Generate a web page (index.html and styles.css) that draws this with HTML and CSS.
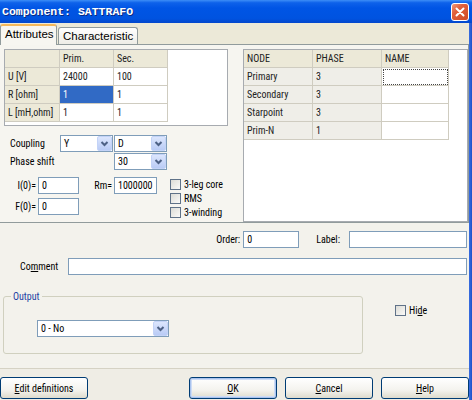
FILE: index.html
```html
<!DOCTYPE html>
<html>
<head>
<meta charset="utf-8">
<link rel="stylesheet" href="styles.css">
</head>
<body>
<div class="titlebar">
  <span class="title">Component: SATTRAFO</span>
  <span class="close"><svg viewBox="0 0 18 18" width="18" height="18"><path d="M5.5 5.5 L12.5 12.5 M12.5 5.5 L5.5 12.5" stroke="#fff" stroke-width="2" stroke-linecap="round"/></svg></span>
</div>
<div class="frame">
  <div class="dlg">
    <div class="tabs">
      <div class="tab active">Attributes</div>
      <div class="tab">Characteristic</div>
    </div>
    <div class="panel">
      <div class="lcol">
        <div class="gridbox">
          <table class="pgrid">
            <colgroup><col class="pc1"><col class="pc2"><col class="pc3"></colgroup>
            <tr><th></th><th>Prim.</th><th>Sec.</th></tr>
            <tr><th>U [V]</th><td>24000</td><td>100</td></tr>
            <tr><th>R [ohm]</th><td class="sel">1</td><td>1</td></tr>
            <tr><th>L [mH,ohm]</th><td>1</td><td>1</td></tr>
          </table>
        </div>
        <div class="crow coupling">
          <span class="clbl">Coupling</span>
          <div class="combo w53"><span class="cval">Y</span><span class="arr"><svg viewBox="0 0 15 15" width="15" height="15"><path d="M4.5 6 L7.5 9 L10.5 6" fill="none" stroke="#4d6185" stroke-width="2"/></svg></span></div>
          <div class="combo w53 ml1"><span class="cval">D</span><span class="arr"><svg viewBox="0 0 15 15" width="15" height="15"><path d="M4.5 6 L7.5 9 L10.5 6" fill="none" stroke="#4d6185" stroke-width="2"/></svg></span></div>
        </div>
        <div class="crow phase">
          <span class="clbl wide">Phase shift</span>
          <div class="combo w53"><span class="cval">30</span><span class="arr"><svg viewBox="0 0 15 15" width="15" height="15"><path d="M4.5 6 L7.5 9 L10.5 6" fill="none" stroke="#4d6185" stroke-width="2"/></svg></span></div>
        </div>
        <div class="init">
          <div class="icol">
            <div class="irow"><span class="ilbl">I(0)=</span><span class="inp w41">0</span></div>
            <div class="irow gap4"><span class="ilbl">F(0)=</span><span class="inp w41">0</span></div>
          </div>
          <div class="irow rm"><span class="rlbl">Rm=</span><span class="inp w43">1000000</span></div>
          <div class="checks">
            <div class="chk"><span class="box"></span>3-leg core</div>
            <div class="chk"><span class="box"></span>RMS</div>
            <div class="chk"><span class="box"></span>3-winding</div>
          </div>
        </div>
      </div>
      <div class="rcol">
        <table class="ngrid">
          <colgroup><col class="nc1"><col class="nc2"><col class="nc3"></colgroup>
          <tr><th>NODE</th><th>PHASE</th><th>NAME</th></tr>
          <tr><td>Primary</td><td>3</td><td class="nm focus"></td></tr>
          <tr><td>Secondary</td><td>3</td><td class="nm"></td></tr>
          <tr><td>Starpoint</td><td>3</td><td class="nm"></td></tr>
          <tr><td>Prim-N</td><td>1</td><td class="nm"></td></tr>
        </table>
      </div>
    </div>
    <div class="orow">
      <span class="olbl">Order:</span><span class="inp w56">0</span>
      <span class="llbl">Label:</span><span class="inp w118"></span>
    </div>
    <div class="comrow">
      <span class="comlbl">Co<u>m</u>ment</span><span class="inp grow"></span>
    </div>
    <div class="outrow">
      <fieldset class="group">
        <legend>Output</legend>
        <div class="combo w132 outsel"><span class="cval">0 - No</span><span class="arr"><svg viewBox="0 0 15 15" width="15" height="15"><path d="M4.5 6 L7.5 9 L10.5 6" fill="none" stroke="#4d6185" stroke-width="2"/></svg></span></div>
      </fieldset>
      <div class="chk hide"><span class="box"></span>Hi<u>d</u>e</div>
    </div>
    <div class="footer">
      <button class="btn"><u>E</u>dit definitions</button>
      <div class="btns">
        <button class="btn def"><u>O</u>K</button>
        <button class="btn"><u>C</u>ancel</button>
        <button class="btn"><u>H</u>elp</button>
      </div>
    </div>
  </div>
  <div class="rframe"></div>
</div>
</body>
</html>
```
FILE: styles.css
```css
* { box-sizing: border-box; }
body {
  margin: 0;
  width: 472px;
  height: 400px;
  overflow: hidden;
  font-family: "Roboto Condensed", "Liberation Sans", Arial, sans-serif;
  font-size: 10px;
  color: #000;
  background: #ece9d8;
}
.titlebar {
  height: 23px;
  display: flex;
  align-items: center;
  justify-content: space-between;
  padding: 0 3px 0 2px;
  background: linear-gradient(#3d8ef7 0%, #0e62ea 12%, #0055e5 35%, #0053e0 80%, #0347cc 100%);
}
.title {
  font: bold 11.5px "Liberation Mono", monospace;
  color: #fff;
  text-shadow: 1px 1px 0 #0a2a80;
}
.close {
  width: 18px;
  height: 18px;
  border: 1px solid #fff;
  border-radius: 3px;
  background: linear-gradient(135deg, #f09a7c 0%, #e0603c 35%, #cf4a26 100%);
  display: flex;
}
.close svg { display: block; margin: -1px; }
.frame { display: flex; height: 377px; }
.dlg {
  width: 469px;
  display: flex;
  flex-direction: column;
  background: #f3f2ec;
}
.rframe { width: 3px; background: linear-gradient(90deg, #3a6fe0, #1b4fc9); }
.tabs {
  height: 21px;
  display: flex;
  align-items: flex-end;
  background: #ece9d8;
}
.tab {
  height: 17px;
  padding: 0 4px;
  border: 1px solid #919b9c;
  border-bottom: none;
  border-radius: 3px 3px 0 0;
  background: linear-gradient(#fefefe, #eeede6);
  font: 11.5px "Liberation Sans", Arial, sans-serif;
  line-height: 16px;
  margin-left: 1px;
}
.tab.active {
  height: 21px;
  width: 57px;
  margin-left: 0;
  border-top: 2px solid #f3b85c;
  background: #f7f6f1;
  line-height: 17px;
  position: relative;
  z-index: 1;
  margin-bottom: -1px;
}
.panel {
  height: 179px;
  border: 1px solid #919b9c;
  border-left: none;
  display: flex;
  padding: 4px 0 0 4px;
  background: #f6f5f0;
}
.lcol { width: 224px; }
.gridbox {
  height: 77px;
  border: 1px solid #a7abb0;
  background: #fff;
}
table { border-collapse: separate; border-spacing: 0; table-layout: fixed; }
.pgrid { width: 163px; }
.pc1 { width: 55px; }
.pc2, .pc3 { width: 54px; }
.pgrid th, .pgrid td, .ngrid th, .ngrid td {
  height: 18px;
  padding: 0 0 0 3px;
  border-right: 1px solid #cfccc0;
  border-bottom: 1px solid #cfccc0;
  font-weight: normal;
  text-align: left;
  white-space: nowrap;
  overflow: hidden;
  color: #222;
}
.pgrid th, .ngrid th { background: #ece9d8; }
.pgrid td { background: #fff; }
.pgrid td.sel { background: #316ac5; color: #fff; }
.rcol {
  margin-left: 15px;
  width: 225px;
  height: 173px;
  border: 1px solid #a7abb0;
  background: #fff;
}
.ngrid { width: 205px; }
.nc1, .nc2 { width: 69px; }
.nc3 { width: 67px; }
.ngrid td { background: #efeee8; }
.ngrid td.nm { background: #fff; }
.ngrid td.focus { outline: 1px dotted #444; outline-offset: -2px; }
.crow { display: flex; align-items: center; padding-left: 6px; height: 17px; }
.coupling { margin-top: 9px; }
.phase { margin-top: 1px; }
.clbl { width: 50px; }
.clbl.wide { width: 104px; }
.combo {
  height: 17px;
  border: 1px solid #7f9db9;
  background: #fff;
  display: flex;
  align-items: center;
  justify-content: space-between;
  padding: 0 0 0 3px;
}
.ml1 { margin-left: 1px; }
.w53 { width: 53px; }
.w132 { width: 132px; }
.outsel { margin-left: 33px; }
.arr {
  width: 15px;
  height: 15px;
  border: 1px solid #c3d3f7;
  border-radius: 2px;
  background: linear-gradient(#dce6fd, #b9cbf5);
  display: flex;
}
.arr svg { display: block; margin: -1px; }
.init { display: flex; margin-top: 7px; padding-left: 4px; white-space: nowrap; }
.irow { display: flex; align-items: center; }
.gap4 { margin-top: 4px; }
.ilbl { width: 28px; text-align: right; margin-right: 2px; }
.inp {
  height: 17px;
  border: 1px solid #7f9db9;
  background: #fff;
  padding: 0 3px;
  line-height: 15px;
  display: block;
  white-space: nowrap;
  overflow: hidden;
}
.w41 { width: 41px; }
.w43 { width: 43px; }
.w56 { width: 56px; }
.w118 { width: 118px; }
.rm { margin-left: 12px; align-self: flex-start; }
.rlbl { width: 21px; text-align: right; margin-right: 2px; }
.checks { margin-left: 13px; }
.chk { display: flex; align-items: center; height: 14px; white-space: nowrap; }
.box {
  width: 11px;
  height: 11px;
  border: 1px solid #5f7288;
  background: linear-gradient(135deg, #dcdcd6, #fafaf8);
  margin-right: 3px;
  flex: none;
}
.orow {
  display: flex;
  align-items: center;
  justify-content: flex-end;
  padding-right: 2px;
  margin-top: 8px;
  height: 17px;
}
.olbl { margin-right: 3px; }
.llbl { margin-left: 17px; margin-right: 9px; }
.comrow {
  display: flex;
  align-items: center;
  margin-top: 10px;
  padding-left: 20px;
  padding-right: 2px;
  height: 17px;
}
.comlbl { width: 48px; }
.grow { flex: 1; }
.outrow { display: flex; align-items: flex-start; margin-top: 15px; }
.group {
  margin: 0 0 0 3px;
  width: 360px;
  height: 64px;
  border: 1px solid #d0d0bf;
  border-radius: 3px;
  padding: 17px 0 0 0;
  min-width: 0;
}
.group legend {
  padding: 0 2px;
  margin-left: 7px;
  color: #1d3fa3;
  line-height: 13px;
}
.hide { margin-left: 32px; margin-top: 13px; }
.footer {
  margin-top: 14px;
  border-top: 1px solid #d5d2c4;
  background: #efede5;
  flex: 1;
  display: flex;
  align-items: flex-start;
  padding-top: 8px;
}
.btns { margin-left: auto; display: flex; gap: 8px; }
.btn {
  width: 88px;
  height: 22px;
  border: 1px solid #003c74;
  border-radius: 3px;
  background: linear-gradient(#ffffff 0%, #f4f3ee 60%, #dedbcd 100%);
  font-family: "Roboto Condensed", "Liberation Sans", Arial, sans-serif;
  font-size: 10px;
  color: #000;
  padding: 0;
}
.btn.def { box-shadow: inset 0 0 0 1px #a9c3ee, inset 0 0 0 2px #cedcf5; }
```
